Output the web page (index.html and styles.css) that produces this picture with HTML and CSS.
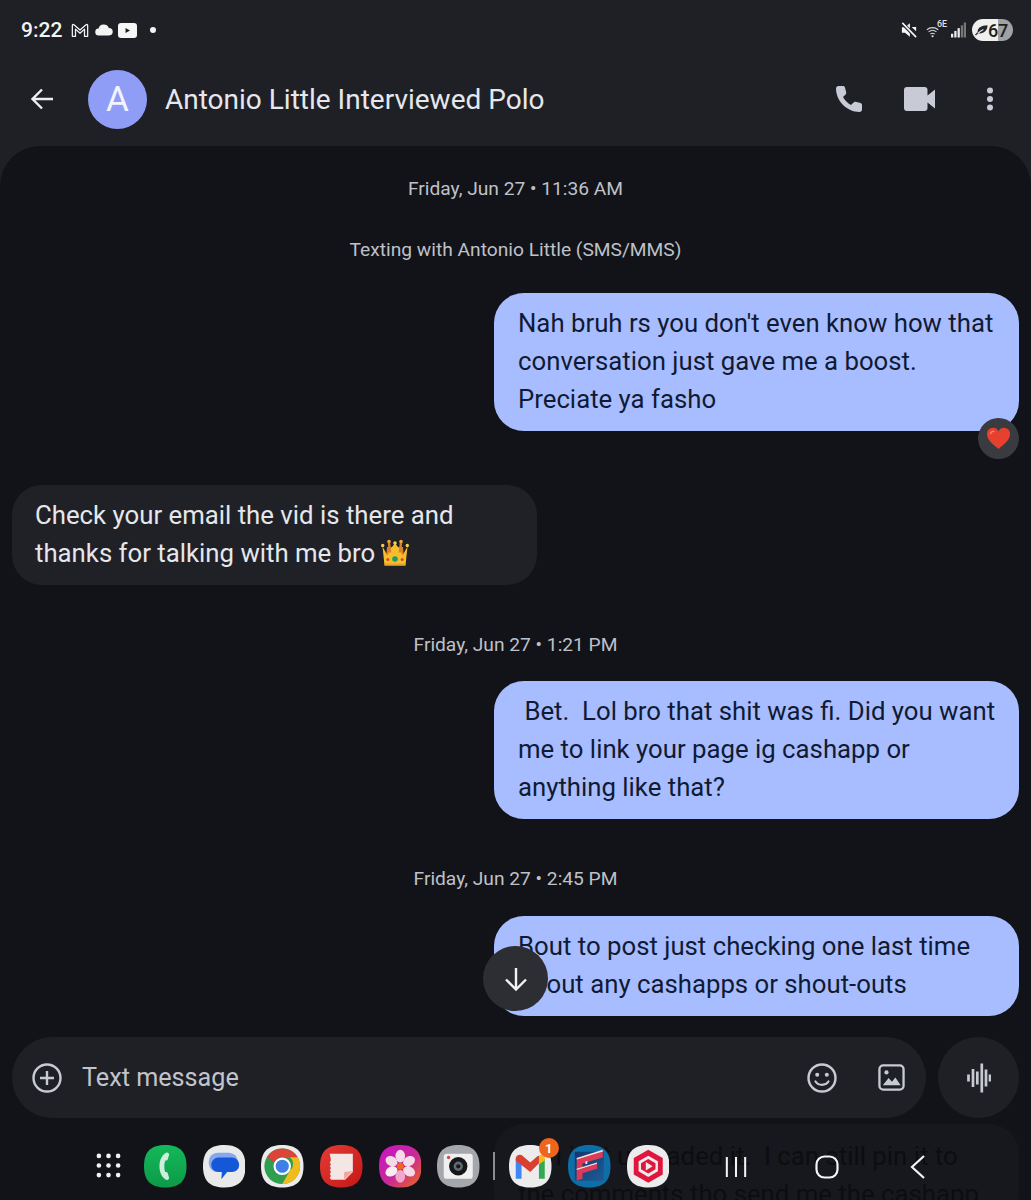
FILE: index.html
```html
<!DOCTYPE html>
<html lang="en">
<head>
<meta charset="utf-8">
<title>Antonio Little Interviewed Polo</title>
<link rel="stylesheet" href="styles.css">
</head>
<body>
<div class="phone">
  <div class="status">
    <div class="status-left">
      <span class="clock">9:22</span>
      <svg class="s-gmail" viewBox="0 0 20 16"><path d="M1.500 14.500V2.500c0-1 1-1.500 1.800-.9L10 7.500l6.700-5.900c.8-.6 1.800-.1 1.800.9v12h-3.500V6.500L10 11 5 6.500v8z" fill="none" stroke="#f2f2f2" stroke-width="1.400" stroke-linejoin="round"/></svg>
      <svg class="s-cloud" viewBox="0 0 18 12"><path d="M4 11.500a3.500 3.500 0 0 1-.5-7A5.500 5.500 0 0 1 13.800 3.900 3.800 3.800 0 0 1 14 11.500z" fill="#f4f4f4"/></svg>
      <svg class="s-yt" viewBox="0 0 19 15"><rect width="19" height="15" rx="3" fill="#f6f6f6"/><path d="M7.500 5v5l4.500-2.500z" fill="#1e2026"/></svg>
      <span class="s-dot"></span>
    </div>
    <div class="status-right">
      <svg class="s-mute" viewBox="0 0 18 18"><path d="M1 6h3.500L10 1.500v15L4.500 12H1z" fill="#f6f6f6"/><path d="M12 5.500l5 5v-5z" fill="#f6f6f6"/><path d="M1.500 1.500l15 15" stroke="#1e2026" stroke-width="4"/><path d="M1.500 1l15.500 16" stroke="#f6f6f6" stroke-width="1.800"/></svg>
      <span class="s-wifi">
        <svg viewBox="0 0 16 14"><path d="M1 5a10 10 0 0 1 13 0M3 7.500a7 7 0 0 1 9 0M5 10a4 4 0 0 1 5 0" fill="none" stroke="#d6d6d6" stroke-width="1.200"/><circle cx="7.500" cy="12.500" r="1.200" fill="#e8e8e8"/></svg>
        <span class="s-6e">6E</span>
      </span>
      <svg class="s-signal" viewBox="0 0 16 16"><rect x="0" y="12" width="2.400" height="4" fill="#eee"/><rect x="3.500" y="9" width="2.400" height="7" fill="#eee"/><rect x="7" y="6" width="2.400" height="10" fill="#eee"/><rect x="10.500" y="3" width="2.400" height="13" fill="#777"/><rect x="13.600" y="0" width="2.400" height="16" fill="#777"/></svg>
      <span class="battery">
        <svg class="s-leaf" viewBox="0 0 14 12"><path d="M3 9.500C1.500 4 7 1 13.500 1c0 5.500-4 9.500-10.500 8.500z" fill="#23252b"/><path d="M1 11.500C3 9.500 6 7 9 5.500" fill="none" stroke="#efeff0" stroke-width="1.100"/><path d="M.5 11.500L3 9" stroke="#23252b" stroke-width="1.400"/></svg>
        <span class="batt-num">67</span>
      </span>
    </div>
  </div>

  <header class="appbar">
    <svg class="back" viewBox="0 0 24 24"><path d="M23 12H2.500M12 2.500L2.500 12l9.500 9.500" fill="none" stroke="#eceef2" stroke-width="2.400"/></svg>
    <div class="avatar">A</div>
    <h1 class="title">Antonio Little Interviewed Polo</h1>
    <div class="actions">
      <svg class="a-phone" viewBox="0 0 28 28"><path d="M1 3.500C1 2 2.200 1 3.500 1H8c1 0 1.700.6 2 1.500l1.200 4.800c.2.800 0 1.500-.6 2.100L8 12c2 3.500 4.500 6 8 8l2.600-2.600c.6-.6 1.300-.8 2.100-.6l4.800 1.200c.9.300 1.500 1 1.500 2v4.500c0 1.300-1 2.500-2.500 2.500C12 27 1 16 1 3.500z" fill="#c8cad6"/></svg>
      <svg class="a-video" viewBox="0 0 31 24"><path d="M3 0h17.500a3 3 0 0 1 3 3v5.500L31 2.500v19l-7.500-6V21a3 3 0 0 1-3 3H3a3 3 0 0 1-3-3V3a3 3 0 0 1 3-3z" fill="#c8cad6"/></svg>
      <svg class="a-more" viewBox="0 0 8 24"><circle cx="4" cy="3.500" r="3" fill="#c8cad6"/><circle cx="4" cy="12" r="3" fill="#c8cad6"/><circle cx="4" cy="20.500" r="3" fill="#c8cad6"/></svg>
    </div>
  </header>

  <main class="chat">
    <p class="stamp stamp-first">Friday, Jun 27 • 11:36 AM</p>
    <p class="stamp stamp-info">Texting with Antonio Little (SMS/MMS)</p>

    <div class="bubble out">
      Nah bruh rs you don't even know how that conversation just gave me a boost. Preciate ya fasho
      <span class="reaction">
        <svg viewBox="0 0 28 26"><path d="M14 25C7 19 1 14.500 1 8a6.800 6.800 0 0 1 13-3 6.800 6.800 0 0 1 13 3c0 6.500-6 11-13 17z" fill="#e8402f"/><path d="M5 7.500c.5-1.800 2-2.800 3.500-2.500" fill="none" stroke="#ff8a7d" stroke-width="1.600" stroke-linecap="round"/></svg>
      </span>
    </div>

    <div class="bubble in">Check your email the vid is there and thanks for talking with me bro <svg class="crown" viewBox="0 0 28 28"><path d="M6 8h16l1 12H5z" fill="#d9812a"/><path d="M1.500 7.500l5 9 2-5L14 4l5.500 7.500 2 5 5-9-2 19H3.500z" fill="#f7bd2a"/><path d="M8 3.500l1 10M20 3.500l-1 10" stroke="#d9812a" stroke-width="2.500"/><circle cx="1.700" cy="6.500" r="1.700" fill="#f9cf4a"/><circle cx="8" cy="2.500" r="1.800" fill="#f2a33a"/><circle cx="14" cy="4" r="1.800" fill="#f9cf4a"/><circle cx="20" cy="2.500" r="1.800" fill="#f2a33a"/><circle cx="26.300" cy="6.500" r="1.700" fill="#f9cf4a"/><circle cx="14" cy="20" r="2.800" fill="#1f9a6a"/><circle cx="6.800" cy="20.500" r="1.500" fill="#d2452f"/><circle cx="21.200" cy="20.500" r="1.500" fill="#d2452f"/><path d="M3.500 24.500h21l-.2 2h-20.600z" fill="#eaa224"/></svg></div>

    <p class="stamp stamp-second">Friday, Jun 27 • 1:21 PM</p>
    <div class="bubble out">&nbsp;Bet.&nbsp; Lol bro that shit was fi. Did you want me to link your page ig cashapp or anything like that?</div>

    <p class="stamp stamp-third">Friday, Jun 27 • 2:45 PM</p>
    <div class="bubble out bubble-last">
      Bout to post just checking one last time about any cashapps or shout-outs
      <button class="jump" aria-label="Scroll to latest">
        <svg viewBox="0 0 24 24"><path d="M12 1V22.500M2 12.500l10 10 10-10" fill="none" stroke="#f2f2f2" stroke-width="2.400"/></svg>
      </button>
    </div>

    <div class="composer">
      <div class="field">
        <svg class="c-plus" viewBox="0 0 30 30"><circle cx="15" cy="15" r="13.500" fill="none" stroke="#c8cad2" stroke-width="2.400"/><path d="M15 8v14M8 15h14" stroke="#c8cad2" stroke-width="2.400"/></svg>
        <span class="placeholder">Text message</span>
        <svg class="c-emoji" viewBox="0 0 30 30"><circle cx="15" cy="15" r="13.500" fill="none" stroke="#c8cad2" stroke-width="2.400"/><circle cx="10.200" cy="11.800" r="2" fill="#c8cad2"/><circle cx="19.800" cy="11.800" r="2" fill="#c8cad2"/><path d="M8.500 18.500c3 4.500 10 4.500 13 0" fill="none" stroke="#c8cad2" stroke-width="2.200" stroke-linecap="round"/></svg>
        <svg class="c-image" viewBox="0 0 28 28"><rect x="1.500" y="1.500" width="25" height="25" rx="4" fill="none" stroke="#c8cad2" stroke-width="2.400"/><circle cx="8.800" cy="8.800" r="2.200" fill="#c8cad2"/><path d="M5 22l6-7.500 3.500 4 3.500-4.500 5.500 8z" fill="#c8cad2"/></svg>
      </div>
      <div class="mic">
        <svg viewBox="0 0 24 30"><path d="M1.500 11.500v7M6 6v18M10.300 8.500v13M14.800 .5v29M19 6.500v17M23 11.500v7" stroke="#c8cad2" stroke-width="2.700" fill="none"/></svg>
      </div>
    </div>

    <div class="bubble out ghost">Ok I just uploaded it.&nbsp; I can still pin it to<br>the comments tho send me the cashapp</div>
  </main>

  <nav class="dock">
    <svg class="apps" viewBox="0 0 26 26"><g fill="#f2f2f2"><circle cx="3" cy="3" r="2.400"/><circle cx="13" cy="3" r="2.400"/><circle cx="23" cy="3" r="2.400"/><circle cx="3" cy="13" r="2.400"/><circle cx="13" cy="13" r="2.400"/><circle cx="23" cy="13" r="2.400"/><circle cx="3" cy="23" r="2.400"/><circle cx="13" cy="23" r="2.400"/><circle cx="23" cy="23" r="2.400"/></g></svg>
    <div class="icons">
      <svg class="icon" viewBox="0 0 44 44"><defs><linearGradient id="g1" x1="0" y1="0" x2="0" y2="1"><stop offset="0" stop-color="#14b85a"/><stop offset="1" stop-color="#0c9a48"/></linearGradient></defs><path d="M22 0c14 0 22 6 22 22s-8 22-22 22S0 38 0 22 8 0 22 0z" fill="url(#g1)"/><path d="M23 8c-4 2-7 7-7 14s3 12 7 14c1.500.7 3-.5 3-2l-1.500-5c-.3-1-1.500-1.200-2.500-1-.8-2-1-4-1-6s.2-4 1-6c1 .2 2.200 0 2.500-1L26 10c0-1.500-1.500-2.700-3-2z" fill="#cdeedd"/></svg>
      <svg class="icon" viewBox="0 0 44 44"><path d="M22 0c14 0 22 6 22 22s-8 22-22 22S0 38 0 22 8 0 22 0z" fill="#e9e9e9"/><rect x="6" y="8" width="30" height="20" rx="9" fill="#85a8ef"/><path d="M16 13h14a7.500 7.500 0 0 1 0 15h-5l-6 7.500.5-7.500H16a7.500 7.500 0 0 1 0-15z" fill="#1557d6"/></svg>
      <svg class="icon" viewBox="0 0 44 44"><path d="M22 0c14 0 22 6 22 22s-8 22-22 22S0 38 0 22 8 0 22 0z" fill="#ebebeb"/><circle cx="22" cy="22" r="18.500" fill="#2f9e4f"/><path d="M6 12.800A18.500 18.500 0 0 1 38 12.800H22a9 9 0 0 0-8 5z" fill="#db4437"/><path d="M38 12.800A18.500 18.500 0 0 1 22 40.500l8-14a9 9 0 0 0 0-13.700z" fill="#f0bb1d"/><circle cx="22" cy="22" r="9" fill="#fff"/><circle cx="22" cy="22" r="6.800" fill="#3f7fe6"/></svg>
      <svg class="icon" viewBox="0 0 44 44"><defs><linearGradient id="g2" x1="0" y1="0" x2="1" y2="1"><stop offset="0" stop-color="#e53a35"/><stop offset="1" stop-color="#c51717"/></linearGradient></defs><path d="M22 0c14 0 22 6 22 22s-8 22-22 22S0 38 0 22 8 0 22 0z" fill="url(#g2)"/><path d="M10 9h24v19l-8 8H12c-1 0-1-1-2-2 1.500-1 1.500-3 0-4 1.500-1 1.500-3 0-4 1.500-1 1.500-3 0-4 1.500-1 1.500-3 0-4 1.500-1 1.500-3 0-9z" fill="#f4e6e2"/><path d="M34 27l-9 1v8z" fill="#f0a7a0"/></svg>
      <svg class="icon" viewBox="0 0 44 44"><defs><linearGradient id="g3" x1="0" y1="0" x2="1" y2="1"><stop offset="0" stop-color="#c913c9"/><stop offset=".55" stop-color="#c92a96"/><stop offset="1" stop-color="#ee6a10"/></linearGradient></defs><path d="M22 0c14 0 22 6 22 22s-8 22-22 22S0 38 0 22 8 0 22 0z" fill="url(#g3)"/><g fill="#f4dbe8"><ellipse cx="22" cy="11.500" rx="5" ry="6.500"/><ellipse cx="22" cy="11.500" rx="5" ry="6.500" transform="rotate(60 22 22)"/><ellipse cx="22" cy="11.500" rx="5" ry="6.500" transform="rotate(120 22 22)"/><ellipse cx="22" cy="11.500" rx="5" ry="6.500" transform="rotate(180 22 22)" fill="#f2a8cc"/><ellipse cx="22" cy="11.500" rx="5" ry="6.500" transform="rotate(240 22 22)" fill="#f8eef4"/><ellipse cx="22" cy="11.500" rx="5" ry="6.500" transform="rotate(300 22 22)"/></g><circle cx="22" cy="22" r="3.400" fill="#ed6a12"/></svg>
      <svg class="icon" viewBox="0 0 44 44"><path d="M22 0c14 0 22 6 22 22s-8 22-22 22S0 38 0 22 8 0 22 0z" fill="#a4a7ac"/><rect x="7" y="9" width="30" height="26" rx="3" fill="#f0f0f0"/><circle cx="12" cy="13" r="1.800" fill="#d94a4a"/><circle cx="22" cy="22" r="9.500" fill="#15171b"/><circle cx="22" cy="22" r="4.800" fill="#5d6d72"/><circle cx="22" cy="22" r="2.200" fill="#16181c"/></svg>
      <span class="dock-sep"></span>
      <span class="badged">
        <svg class="icon" viewBox="0 0 44 44"><path d="M22 0c14 0 22 6 22 22s-8 22-22 22S0 38 0 22 8 0 22 0z" fill="#ececec"/><path d="M7 14v21h6V20z" fill="#4285f4"/><path d="M37 14v21h-6V20z" fill="#34a853"/><path d="M7 14c0-4 5-5 7-3l8 7 8-7 7 3-1 0L22 28 7 16z" fill="#d9402f"/><path d="M31 11c2-1.500 6-1 6 3v2l-6 4z" fill="#f6bb16"/></svg>
        <span class="badge">1</span>
      </span>
      <svg class="icon" viewBox="0 0 44 44"><defs><linearGradient id="g4" x1="0" y1="0" x2="1" y2="1"><stop offset="0" stop-color="#14386e"/><stop offset="1" stop-color="#1c5b96"/></linearGradient></defs><path d="M22 0c14 0 22 6 22 22s-8 22-22 22S0 38 0 22 8 0 22 0z" fill="#0d6ea8"/><rect x="7" y="7" width="30" height="30" fill="url(#g4)"/><path d="M9 14L36 6v7l-27 8zM9 25l21-6.500v6L9 31zM9 14h6v21l-6 2z" fill="#dd3a55"/><path d="M9 13.500L36 5v1.600L9 15zM9 24.500l21-6.500v1.300L9 26zM18 20l2-.6v-3l-2 .6z" fill="#f1e5e5"/></svg>
      <svg class="icon" viewBox="0 0 44 44"><path d="M22 0c14 0 22 6 22 22s-8 22-22 22S0 38 0 22 8 0 22 0z" fill="#ececec"/><path d="M22 5l15 8.500v17L22 39 7 30.500v-17z" fill="#e0163f"/><path d="M22 11l10 5.800v10.400L22 33l-10-5.800V16.800z" fill="#ececec"/><path d="M22 14.500l7.500 4.300v6.400L22 29.500l-7.500-4.300v-6.400z" fill="#e0163f"/><path d="M19.500 17.500v9l7-4.500z" fill="#ececec"/></svg>
    </div>
    <div class="navkeys">
      <svg class="nav-recent" viewBox="0 0 24 24"><path d="M2 1v22M12 1v22M22 1v22" stroke="#f4f4f4" stroke-width="2.200" fill="none"/></svg>
      <svg class="nav-home" viewBox="0 0 24 24"><rect x="1.500" y="1.500" width="21" height="21" rx="8" fill="none" stroke="#f4f4f4" stroke-width="2.200"/></svg>
      <svg class="nav-back" viewBox="0 0 16 24"><path d="M14 1L2 12l12 11" stroke="#f4f4f4" stroke-width="2.200" fill="none"/></svg>
    </div>
  </nav>
</div>
</body>
</html>
```

FILE: styles.css
```css
* { box-sizing: border-box; }
html, body { margin: 0; padding: 0; background: #1e2026; }
body { font-family: Roboto, "Noto Sans", sans-serif; }

.phone {
  position: relative;
  width: 1031px;
  height: 1200px;
  overflow: hidden;
  display: flex;
  flex-direction: column;
  background: #1e2026;
}

/* Status bar */
.status {
  height: 60px;
  flex: none;
  padding: 0 18px 0 21px;
  display: flex;
  align-items: center;
  justify-content: space-between;
}
.status-left, .status-right { display: flex; align-items: center; }
.clock { font-size: 21px; font-weight: 500; color: #f4f4f4; margin-right: 9px; }
.s-gmail { width: 18px; height: 15px; margin-right: 6px; }
.s-cloud { width: 18px; height: 12px; margin-right: 5px; }
.s-yt { width: 19px; height: 15px; margin-right: 13px; }
.s-dot { width: 6px; height: 6px; border-radius: 50%; background: #f4f4f4; }
.s-mute { width: 16px; height: 16px; margin-right: 9px; }
.s-wifi { position: relative; display: block; width: 20px; height: 18px; margin-right: 5px; }
.s-wifi svg { width: 14px; height: 13px; position: absolute; left: 0; top: 4px; }
.s-6e { position: absolute; left: 11px; top: -2px; font-size: 9px; color: #e0e0e0; font-weight: 500; }
.s-signal { width: 15px; height: 16px; margin-right: 6px; }
.battery {
  width: 41px;
  height: 22px;
  border-radius: 11px;
  background: linear-gradient(90deg, #efeff0 0, #efeff0 63%, #a0a1a3 63%, #a0a1a3 100%);
  display: flex;
  align-items: center;
  padding-left: 3px;
}
.s-leaf { width: 13px; height: 12px; flex: none; }
.batt-num { font-size: 18px; font-weight: 500; color: #1c1e23; letter-spacing: -.2px; }

/* App bar */
.appbar {
  height: 86px;
  flex: none;
  padding: 0 37px 8px 30px;
  display: flex;
  align-items: center;
}
.back { width: 24px; height: 24px; margin-right: 34px; }
.avatar {
  width: 59px;
  height: 59px;
  border-radius: 50%;
  background: #8f9df6;
  color: #f3f4fe;
  font-size: 35px;
  display: flex;
  align-items: center;
  justify-content: center;
  margin-right: 18px;
}
.title { margin: 0; font-size: 28px; font-weight: 400; color: #e6e7ec; flex: 1; }
.actions { display: flex; align-items: center; }
.a-phone { width: 28px; height: 28px; margin-right: 41px; }
.a-video { width: 31px; height: 24px; margin-right: 51px; }
.a-more { width: 8px; height: 24px; }

/* Chat */
.chat {
  flex: 1;
  min-height: 0;
  overflow: hidden;
  background: #121318;
  border-radius: 40px 40px 0 0;
  padding: 0 12px;
  display: flex;
  flex-direction: column;
}
.stamp { margin: 0; text-align: center; font-size: 19.200px; line-height: 26px; color: #bfc1c9; }
.stamp-first { margin-top: 30px; }
.stamp-info { margin-top: 35px; margin-bottom: 30px; }
.stamp-second { margin-top: 47px; margin-bottom: 23px; }
.stamp-third { margin-top: 47px; margin-bottom: 24px; }

.bubble {
  position: relative;
  width: 525px;
  padding: 11px 18px 13px 24px;
  border-radius: 30px;
  font-size: 25.750px;
  line-height: 38px;
  flex: none;
}
.out { align-self: flex-end; background: #a8bdff; color: #101a33; }
.in { align-self: flex-start; background: #1f2127; color: #e6e7ec; margin-top: 54px; padding-left: 23px; }
.crown { width: 28px; height: 28px; vertical-align: -5px; margin-left: -1px; }

.reaction {
  position: absolute;
  right: 0;
  bottom: -28px;
  width: 41px;
  height: 41px;
  border-radius: 50%;
  background: #3a3b40;
  display: flex;
  align-items: center;
  justify-content: center;
}
.reaction svg { width: 25px; height: 23px; }

.jump {
  position: absolute;
  left: -11px;
  top: 30px;
  width: 65px;
  height: 65px;
  padding: 0;
  border: 0;
  border-radius: 50%;
  background: #2d2e33;
  display: flex;
  align-items: center;
  justify-content: center;
}
.jump svg { width: 24px; height: 24px; }

/* Composer */
.composer { display: flex; gap: 12px; margin-top: 21px; flex: none; }
.field {
  width: 914px;
  height: 81px;
  border-radius: 41px;
  background: #1e2026;
  display: flex;
  align-items: center;
  padding: 0 21px 0 20px;
}
.c-plus { width: 30px; height: 30px; margin-right: 20px; }
.placeholder { flex: 1; font-size: 25.200px; color: #c2c4cc; }
.c-emoji { width: 30px; height: 30px; margin-right: 41px; }
.c-image { width: 27px; height: 27px; }
.mic {
  width: 81px;
  height: 81px;
  border-radius: 50%;
  background: #1e2026;
  display: flex;
  align-items: center;
  justify-content: center;
}
.mic svg { width: 24px; height: 30px; }

.ghost {
  background: #17181d;
  color: #0c0d11;
  margin-top: 6px;
  padding-top: 13px;
}

/* Dock */
.dock {
  position: absolute;
  left: 0;
  right: 0;
  bottom: 0;
  height: 55px;
  display: flex;
  align-items: flex-start;
  padding: 0 0 0 96px;
}
.apps { width: 25px; height: 25px; margin: 8px 23px 0 0; flex: none; }
.icons { display: flex; align-items: center; gap: 16.200px; flex: none; width: 525px; }
.icon { width: 42.500px; height: 42.500px; display: block; flex: none; }
.dock-sep { width: 2px; height: 28px; background: #8c8d90; margin: 0 -2px 0 -3px; flex: none; }
.badged { position: relative; display: block; flex: none; }
.badge {
  position: absolute;
  right: -7px;
  top: -7px;
  width: 20px;
  height: 20px;
  border-radius: 50%;
  background: #f0651d;
  color: #fff;
  font-size: 13px;
  font-weight: 700;
  display: flex;
  align-items: center;
  justify-content: center;
}
.navkeys { display: flex; align-items: center; height: 43px; padding-left: 56px; }
.nav-recent { width: 22px; height: 24px; margin-right: 68px; }
.nav-home { width: 24px; height: 24px; margin-right: 71px; }
.nav-back { width: 16px; height: 24px; }
```
